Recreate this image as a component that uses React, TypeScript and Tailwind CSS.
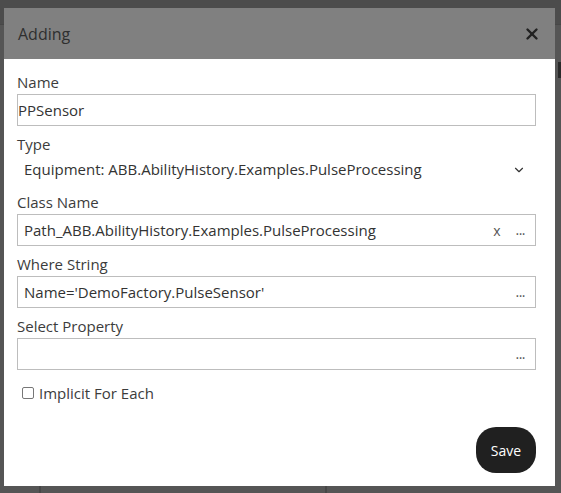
import { ChevronDown, X } from "lucide-react";

const font = { fontFamily: '"Open Sans", "Noto Sans", sans-serif' };

function Field({ label, children }: { label: string; children: React.ReactNode }) {
  return (
    <div className="flex flex-col">
      <label className="h-[20px] text-[15px] leading-[20px] text-[#3c3c3c]">{label}</label>
      {children}
    </div>
  );
}

function TextBox({ value, clear, padded = true }: { value: string; clear?: boolean; padded?: boolean }) {
  return (
    <div
      className={`mt-[2px] flex h-[32px] shrink-0 items-center border border-[#bdbdbd] bg-white pr-[10px] ${
        padded ? "pl-[6px]" : "pl-[0px]"
      }`}
    >
      <span className="flex-1 truncate text-[15px] text-[#333]">{value}</span>
      {clear && <span className="mr-[15px] text-[14px] text-[#555]">x</span>}
      {padded && <span className="text-[14px] leading-none tracking-[-0.5px] text-[#555]">...</span>}
    </div>
  );
}

export default function App() {
  return (
    <div className="relative h-[493px] w-[561px] overflow-hidden bg-[#555]" style={font}>
      {/* dimmed page behind the dialog */}
      <div className="h-[25px] border-b border-[#474747] bg-[#4c4c4c]" />
      <div className="absolute right-0 top-[62px] h-[16px] w-[3px] bg-[#2a2a2a]" />
      <div className="absolute bottom-0 left-[39px] h-[8px] w-[2px] bg-[#474747]" />
      <div className="absolute bottom-0 left-[325px] h-[8px] w-[2px] bg-[#474747]" />

      <div className="absolute left-[4px] top-[8px] flex h-[478px] w-[551px] flex-col bg-white">
        <div className="flex h-[51px] shrink-0 items-center justify-between bg-[#808080] pl-[14px] pr-[14px]">
          <span className="text-[16px] text-[#2f2f2f]">Adding</span>
          <X size={18} strokeWidth={3.2} className="text-[#222]" />
        </div>

        <div className="flex flex-1 flex-col gap-[8px] pl-[13px] pr-[19px] pt-[13px]">
          <Field label="Name">
            <TextBox value="PPSensor" padded={false} />
          </Field>
          <Field label="Type">
            <div className="mt-[1px] flex h-[29px] items-center pl-[7px] pr-[10px]">
              <span className="flex-1 text-[15px] text-[#333]">
                Equipment: ABB.AbilityHistory.Examples.PulseProcessing
              </span>
              <ChevronDown size={14} strokeWidth={2} className="text-[#333]" />
            </div>
          </Field>
          <Field label="Class Name">
            <TextBox value="Path_ABB.AbilityHistory.Examples.PulseProcessing" clear />
          </Field>
          <Field label="Where String">
            <TextBox value="Name='DemoFactory.PulseSensor'" />
          </Field>
          <Field label="Select Property">
            <TextBox value="" />
          </Field>

          <label className="mt-[5px] flex h-[20px] items-center gap-[5px] pl-[5px]">
            <span className="h-[12px] w-[12px] rounded-[2px] border border-[#777] bg-white" />
            <span className="text-[15px] text-[#3c3c3c]">Implicit For Each</span>
          </label>

          <div className="mt-auto flex justify-end pb-[13px]">
            <button className="h-[46px] w-[60px] rounded-[20px] bg-[#202020] text-[14px] font-medium text-white">
              Save
            </button>
          </div>
        </div>
      </div>
    </div>
  );
}
